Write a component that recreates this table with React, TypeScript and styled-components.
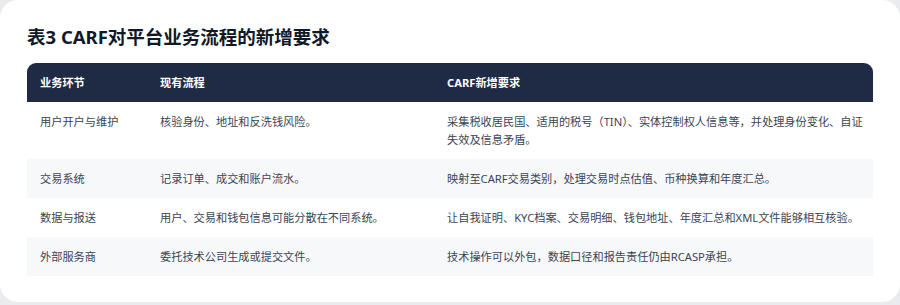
import { createGlobalStyle, styled } from "styled-components";

const GlobalStyle = createGlobalStyle`
  html, body {
    margin: 0;
    padding: 0;
    background-color: #e9ebef;
  }
  body {
    font-family: "Noto Sans", "Noto Sans CJK SC", sans-serif;
  }
`;

const Card = styled.div`
  box-sizing: border-box;
  width: 900px;
  height: 302px;
  background-color: #ffffff;
  border-radius: 18px;
  padding: 24px 27px 26px 27px;
`;

const Title = styled.h2`
  margin: 0 0 13px 0;
  font-size: 18.5px;
  line-height: 26px;
  font-weight: 700;
  color: #111827;
  font-family: "Noto Sans", "Noto Sans CJK SC", sans-serif;
`;

const Table = styled.div`
  display: grid;
  grid-template-columns: 120px 287px 1fr;
  width: 846px;
`;

const HeadCell = styled.div<{ $first?: boolean; $last?: boolean }>`
  background-color: #1f2a44;
  color: #ffffff;
  font-weight: 700;
  font-size: 11.2px;
  line-height: 18px;
  padding: 10.5px 4px 10.5px 13px;
  border-top-left-radius: ${({ $first }) => ($first ? "9px" : "0")};
  border-top-right-radius: ${({ $last }) => ($last ? "9px" : "0")};
`;

const Cell = styled.div<{ $shaded?: boolean }>`
  background-color: ${({ $shaded }) => ($shaded ? "#f7f8fa" : "#ffffff")};
  color: #3b4453;
  font-size: 11.2px;
  line-height: 18px;
  padding: 10.5px 4px 10.5px 13px;
`;

const rows: [string, string, string][] = [
  [
    "用户开户与维护",
    "核验身份、地址和反洗钱风险。",
    "采集税收居民国、适用的税号（TIN）、实体控制权人信息等，并处理身份变化、自证失效及信息矛盾。",
  ],
  ["交易系统", "记录订单、成交和账户流水。", "映射至CARF交易类别，处理交易时点估值、币种换算和年度汇总。"],
  [
    "数据与报送",
    "用户、交易和钱包信息可能分散在不同系统。",
    "让自我证明、KYC档案、交易明细、钱包地址、年度汇总和XML文件能够相互核验。",
  ],
  ["外部服务商", "委托技术公司生成或提交文件。", "技术操作可以外包，数据口径和报告责任仍由RCASP承担。"],
];

function App() {
  return (
    <>
      <GlobalStyle />
      <Card>
        <Title>表3 CARF对平台业务流程的新增要求</Title>
        <Table>
          <HeadCell $first>业务环节</HeadCell>
          <HeadCell>现有流程</HeadCell>
          <HeadCell $last>CARF新增要求</HeadCell>
          {rows.map((row, i) =>
            row.map((text, j) => (
              <Cell key={`${i}-${j}`} $shaded={i % 2 === 1}>
                {text}
              </Cell>
            ))
          )}
        </Table>
      </Card>
    </>
  );
}

export default App;
